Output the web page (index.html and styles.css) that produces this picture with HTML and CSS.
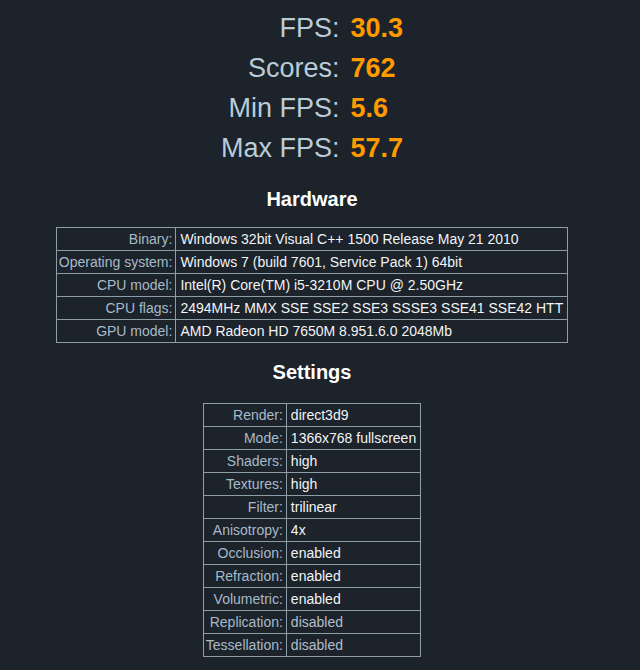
FILE: index.html
```html
<!DOCTYPE html>
<html>
<head>
<meta charset="utf-8">
<link rel="stylesheet" href="styles.css">
</head>
<body>
<div class="page">
  <table class="stats">
    <tr><td class="sl">FPS:</td><td class="sv">30.3</td></tr>
    <tr><td class="sl">Scores:</td><td class="sv">762</td></tr>
    <tr><td class="sl">Min FPS:</td><td class="sv">5.6</td></tr>
    <tr><td class="sl">Max FPS:</td><td class="sv">57.7</td></tr>
  </table>

  <h3 class="heading hw-heading">Hardware</h3>
  <table class="info">
    <tr><td class="k">Binary:</td><td class="v">Windows 32bit Visual C++ 1500 Release May 21 2010</td></tr>
    <tr><td class="k">Operating system:</td><td class="v">Windows 7 (build 7601, Service Pack 1) 64bit</td></tr>
    <tr><td class="k">CPU model:</td><td class="v">Intel(R) Core(TM) i5-3210M CPU @ 2.50GHz</td></tr>
    <tr><td class="k">CPU flags:</td><td class="v">2494MHz MMX SSE SSE2 SSE3 SSSE3 SSE41 SSE42 HTT</td></tr>
    <tr><td class="k">GPU model:</td><td class="v">AMD Radeon HD 7650M 8.951.6.0 2048Mb</td></tr>
  </table>

  <h3 class="heading st-heading">Settings</h3>
  <table class="info settings">
    <tr><td class="k">Render:</td><td class="v">direct3d9</td></tr>
    <tr><td class="k">Mode:</td><td class="v">1366x768 fullscreen</td></tr>
    <tr><td class="k">Shaders:</td><td class="v">high</td></tr>
    <tr><td class="k">Textures:</td><td class="v">high</td></tr>
    <tr><td class="k">Filter:</td><td class="v">trilinear</td></tr>
    <tr><td class="k">Anisotropy:</td><td class="v">4x</td></tr>
    <tr><td class="k">Occlusion:</td><td class="v">enabled</td></tr>
    <tr><td class="k">Refraction:</td><td class="v">enabled</td></tr>
    <tr><td class="k">Volumetric:</td><td class="v">enabled</td></tr>
    <tr><td class="k">Replication:</td><td class="v off">disabled</td></tr>
    <tr><td class="k">Tessellation:</td><td class="v off">disabled</td></tr>
  </table>
</div>
</body>
</html>
```
FILE: styles.css
```css
html, body {
  margin: 0;
  padding: 0;
  background: #1c232b;
}
body {
  font-family: "Liberation Sans", Arial, sans-serif;
  color: #eef2f5;
}
.page {
  width: 624px;
  display: flex;
  flex-direction: column;
  align-items: center;
  padding-top: 8px;
}
.stats {
  border-collapse: collapse;
}
.stats td {
  font-size: 27px;
  line-height: 40px;
  height: 40px;
  padding: 0;
}
.stats .sl {
  text-align: right;
  color: #b9ccd8;
  padding-right: 11px;
}
.stats .sv {
  text-align: left;
  color: #ff9a00;
  font-weight: bold;
}
.heading {
  margin: 0;
  font-size: 20px;
  font-weight: bold;
  color: #ffffff;
  line-height: 24px;
}
.hw-heading {
  margin-top: 19px;
  margin-bottom: 16px;
}
.st-heading {
  margin-top: 17px;
  margin-bottom: 19px;
}
.info {
  border-collapse: collapse;
  border: 1px solid #8d9ea9;
}
.info td {
  border: 1px solid #8d9ea9;
  font-size: 14px;
  line-height: 16px;
  padding: 3px 4px 3px 4px;
  white-space: nowrap;
}
.info .k {
  text-align: right;
  color: #a7bac8;
  padding-right: 3px;
  padding-left: 2px;
}
.info .v {
  text-align: left;
  color: #f2f4f6;
}
.info .v.off {
  color: #b3bfc9;
}
```
